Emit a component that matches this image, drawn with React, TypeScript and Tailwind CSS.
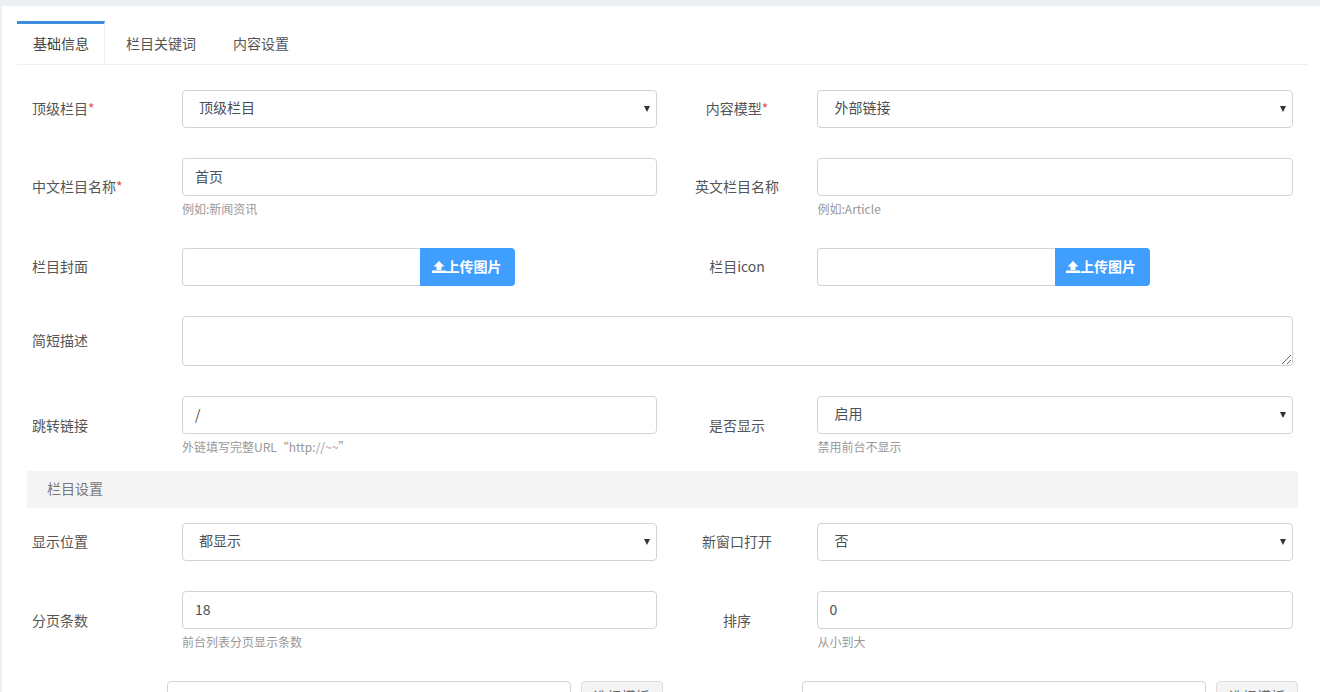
import { ReactNode } from 'react'

const star = <span className="text-[#d9534f]">*</span>

function Label({ right, low, children }: { right?: boolean; low?: boolean; children: ReactNode }) {
  const pad = low ? 'pb-0' : 'pb-[2px]'
  return (
    <label className={(right ? 'w-[139px] mr-[10px] shrink-0 text-center ' : 'w-[150px] shrink-0 ') + pad}>
      {children}
    </label>
  )
}

function Select({ value, right }: { value: string; right?: boolean }) {
  return (
    <div className={(right ? 'pl-[17px] ' : 'pl-[16px] ') + 'relative h-[38px] border border-[#d1d3d6] rounded-[4px] pb-[3px] flex items-center text-[#495057]'}>
      {value}
      <svg className="absolute right-[6px] top-[15px]" width="6" height="6" viewBox="0 0 6 6" fill="#333">
        <path d="M0 0H6L3 6Z" />
      </svg>
    </div>
  )
}

function Input({ value }: { value?: string }) {
  return (
    <div className="h-[38px] border border-[#d1d3d6] rounded-[4px] px-[12px] pb-[2px] flex items-center text-[#495057]">
      {value}
    </div>
  )
}

function Help({ right, children }: { right?: boolean; children: ReactNode }) {
  return <p className={(right ? 'pl-[1px] ' : '') + 'mt-[4px] h-[16px] text-[12px] leading-[18px] text-[#999]'}>{children}</p>
}

function Upload() {
  return (
    <div className="flex h-[38px] w-[333px]">
      <div className="w-[238px] border border-r-0 border-[#d1d3d6] rounded-l-[4px]" />
      <button className="flex-1 bg-[#409eff] text-white font-semibold rounded-r-[4px] pr-[2px] pb-[1px] flex items-center justify-center">
        <svg width="14" height="14" viewBox="0 0 14 14" fill="currentColor">
          <path d="M7 1 12.5 6.5H9.5V10H4.5V6.5H1.5Z" />
          <rect x="0" y="10.5" width="14" height="2.5" />
        </svg>
        上传图片
      </button>
    </div>
  )
}

function Pair({ children }: { children: ReactNode }) {
  return <div className="flex items-center w-1/2 pl-[5px]">{children}</div>
}

function Field({ right, children }: { right?: boolean; children: ReactNode }) {
  return <div className={right ? 'w-[476px]' : 'w-[475px]'}>{children}</div>
}

function TemplateButton() {
  return (
    <button className="w-[82px] h-[38px] bg-[#f4f4f4] border border-[#ddd] rounded-[4px] pt-[4px] self-start text-[#666] flex justify-center">
      选择模板
    </button>
  )
}

export default function App() {
  return (
    <div className="h-[692px] overflow-hidden bg-[#ecf0f5] pt-[6px] pl-[2px] text-[14px] text-[#555] font-['Noto_Sans_CJK_SC',sans-serif]">
      <div className="bg-white h-full pt-[15px] pl-[15px] pr-[12px]">
        <div className="flex h-[44px] border-b border-[#f0f0f0] items-stretch">
          <div className="w-[88px] border-t-[3px] border-t-[#3c8dde] border-r border-r-[#f0f0f0] pl-[16px] pt-[9px] bg-white text-[#444]">
            基础信息
          </div>
          <div className="ml-[3px] px-[18px] pt-[12px]">栏目关键词</div>
          <div className="ml-[1px] px-[18px] pt-[12px]">内容设置</div>
        </div>

        <div className="w-[1271px] ml-[10px] pt-[25px]">
          <div className="flex mb-[30px]">
            <Pair>
              <Label>顶级栏目{star}</Label>
              <Field><Select value="顶级栏目" /></Field>
            </Pair>
            <Pair>
              <Label right>内容模型{star}</Label>
              <Field right><Select right value="外部链接" /></Field>
            </Pair>
          </div>

          <div className="flex mb-[32px]">
            <Pair>
              <Label>中文栏目名称{star}</Label>
              <Field>
                <Input value="首页" />
                <Help>例如:新闻资讯</Help>
              </Field>
            </Pair>
            <Pair>
              <Label right>英文栏目名称</Label>
              <Field right>
                <Input />
                <Help right>例如:Article</Help>
              </Field>
            </Pair>
          </div>

          <div className="flex mb-[30px]">
            <Pair>
              <Label>栏目封面</Label>
              <Field><Upload /></Field>
            </Pair>
            <Pair>
              <Label right>栏目icon</Label>
              <Field right><Upload /></Field>
            </Pair>
          </div>

          <div className="flex items-center mb-[30px] pl-[5px]">
            <Label>简短描述</Label>
            <div className="relative h-[50px] w-[1111px] border border-[#d1d3d6] rounded-[4px]">
              <svg className="absolute right-0 bottom-0" width="11" height="11" viewBox="0 0 11 11" stroke="#666" strokeWidth="1">
                <path d="M1 10 10 1M6 10 10 6" />
              </svg>
            </div>
          </div>

          <div className="flex mb-[17px]">
            <Pair>
              <Label low>跳转链接</Label>
              <Field>
                <Input value="/" />
                <Help>外链填写完整URL“http://~~”</Help>
              </Field>
            </Pair>
            <Pair>
              <Label right low>是否显示</Label>
              <Field right>
                <Select right value="启用" />
                <Help right>禁用前台不显示</Help>
              </Field>
            </Pair>
          </div>

          <div className="h-[37px] mb-[15px] bg-[#f4f4f4] pl-[20px] pb-[2px] flex items-center text-[#777]">栏目设置</div>

          <div className="flex mb-[30px]">
            <Pair>
              <Label>显示位置</Label>
              <Field><Select value="都显示" /></Field>
            </Pair>
            <Pair>
              <Label right>新窗口打开</Label>
              <Field right><Select right value="否" /></Field>
            </Pair>
          </div>

          <div className="flex mb-[32px]">
            <Pair>
              <Label low>分页条数</Label>
              <Field>
                <Input value="18" />
                <Help>前台列表分页显示条数</Help>
              </Field>
            </Pair>
            <Pair>
              <Label right low>排序</Label>
              <Field right>
                <Input value="0" />
                <Help right>从小到大</Help>
              </Field>
            </Pair>
          </div>

          <div className="flex">
            <div className="flex w-1/2 pl-[140px] gap-[10px]">
              <div className="w-[404px] h-[38px] border border-[#d1d3d6] rounded-[4px]" />
              <TemplateButton />
            </div>
            <div className="flex w-1/2 pl-[139px] gap-[10px]">
              <div className="w-[405px] h-[38px] border border-[#d1d3d6] rounded-[4px]" />
              <TemplateButton />
            </div>
          </div>
        </div>
      </div>
    </div>
  )
}
